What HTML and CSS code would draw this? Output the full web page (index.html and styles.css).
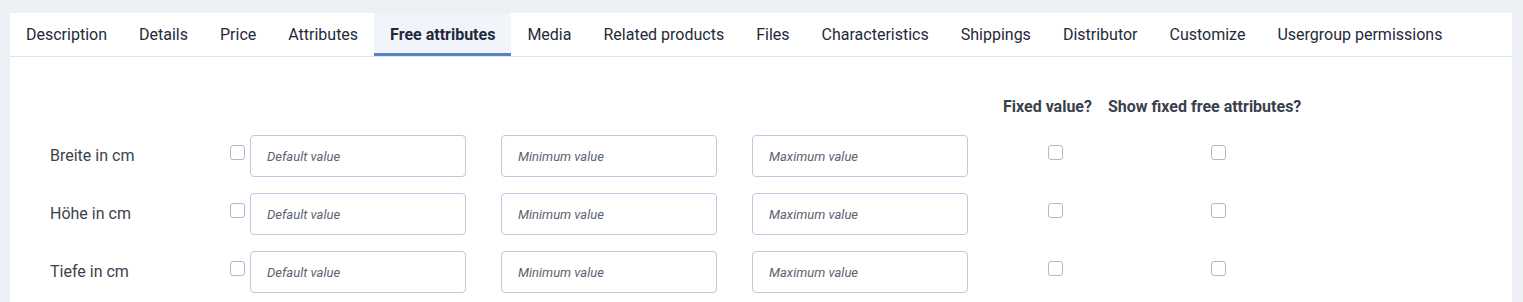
FILE: index.html
```html
<!DOCTYPE html>
<html lang="en">
  <head>
    <meta charset="UTF-8" />
    <meta name="viewport" content="width=device-width, initial-scale=1.0" />
    <title>Product - Free attributes</title>
    <link rel="stylesheet" href="styles.css">
  </head>
  <body>
    <div class="panel">
      <ul class="tabs">
        <li class="tab">Description</li>
        <li class="tab">Details</li>
        <li class="tab">Price</li>
        <li class="tab">Attributes</li>
        <li class="tab active">Free attributes</li>
        <li class="tab">Media</li>
        <li class="tab">Related products</li>
        <li class="tab">Files</li>
        <li class="tab">Characteristics</li>
        <li class="tab">Shippings</li>
        <li class="tab">Distributor</li>
        <li class="tab">Customize</li>
        <li class="tab">Usergroup permissions</li>
      </ul>

      <div class="tab-content">
        <div class="attr-grid">
          <!-- header row -->
          <div></div>
          <div></div>
          <div></div>
          <div></div>
          <div class="col-head">Fixed value?</div>
          <div class="col-head">Show fixed free attributes?</div>

          <!-- Breite -->
          <label class="attr-name">Breite in cm</label>
          <div class="default-cell">
            <input type="checkbox" class="check" />
            <input type="text" class="field" placeholder="Default value" />
          </div>
          <div><input type="text" class="field" placeholder="Minimum value" /></div>
          <div><input type="text" class="field" placeholder="Maximum value" /></div>
          <div class="center-cell"><input type="checkbox" class="check" /></div>
          <div class="center-cell"><input type="checkbox" class="check" /></div>

          <!-- Höhe -->
          <label class="attr-name">Höhe in cm</label>
          <div class="default-cell">
            <input type="checkbox" class="check" />
            <input type="text" class="field" placeholder="Default value" />
          </div>
          <div><input type="text" class="field" placeholder="Minimum value" /></div>
          <div><input type="text" class="field" placeholder="Maximum value" /></div>
          <div class="center-cell"><input type="checkbox" class="check" /></div>
          <div class="center-cell"><input type="checkbox" class="check" /></div>

          <!-- Tiefe -->
          <label class="attr-name">Tiefe in cm</label>
          <div class="default-cell">
            <input type="checkbox" class="check" />
            <input type="text" class="field" placeholder="Default value" />
          </div>
          <div><input type="text" class="field" placeholder="Minimum value" /></div>
          <div><input type="text" class="field" placeholder="Maximum value" /></div>
          <div class="center-cell"><input type="checkbox" class="check" /></div>
          <div class="center-cell"><input type="checkbox" class="check" /></div>
        </div>
      </div>
    </div>
  </body>
</html>
```

FILE: styles.css
```css
body {
  font-family: Roboto, "Liberation Sans", Arial, sans-serif;
  background-color: #ecf0f4;
  margin: 0;
  padding: 13px 11px 0 10px;
  color: #232a35;
}

.panel {
  background-color: #fff;
  min-height: 400px;
}

.tabs {
  display: flex;
  list-style: none;
  margin: 0;
  padding: 0;
  border-bottom: 1px solid #dfe5ee;
}

.tab {
  padding: 3px 16px 0;
  height: 37px;
  line-height: 37px;
  font-size: 16px;
  color: #1f2a3b;
  border-bottom: 3px solid transparent;
  cursor: pointer;
}

.tab.active {
  font-weight: 700;
  background-color: #f1f4f9;
  border-bottom-color: #5b83c2;
}

.tab-content {
  padding: 38px 40px 0;
}

.attr-grid {
  display: grid;
  grid-template-columns: 180px 271px 251px 251px 105px 221px;
  grid-template-rows: 24px repeat(3, 42px);
  row-gap: 16px;
}

.col-head {
  font-size: 16px;
  font-weight: 700;
  line-height: 24px;
  color: #3a404b;
  white-space: nowrap;
}

.attr-name {
  align-self: center;
  margin-top: -2px;
  font-size: 16px;
  color: #3c424c;
}

.default-cell {
  display: flex;
  align-items: flex-start;
  gap: 5px;
}

.center-cell {
  display: flex;
  justify-content: center;
}

.check {
  appearance: none;
  -webkit-appearance: none;
  width: 15px;
  height: 15px;
  margin: 10px 0 0;
  border: 1px solid #b3b9c2;
  border-radius: 3px;
  background-color: #fff;
  flex-shrink: 0;
}

.field {
  box-sizing: border-box;
  width: 216px;
  height: 42px;
  padding: 0 16px;
  border: 1px solid #bccadf;
  border-radius: 4px;
  font-family: Roboto, "Liberation Sans", Arial, sans-serif;
  font-size: 13px;
  color: #232a35;
  background-color: #fff;
}

.field::placeholder {
  font-style: italic;
  color: #5c6370;
}
```
